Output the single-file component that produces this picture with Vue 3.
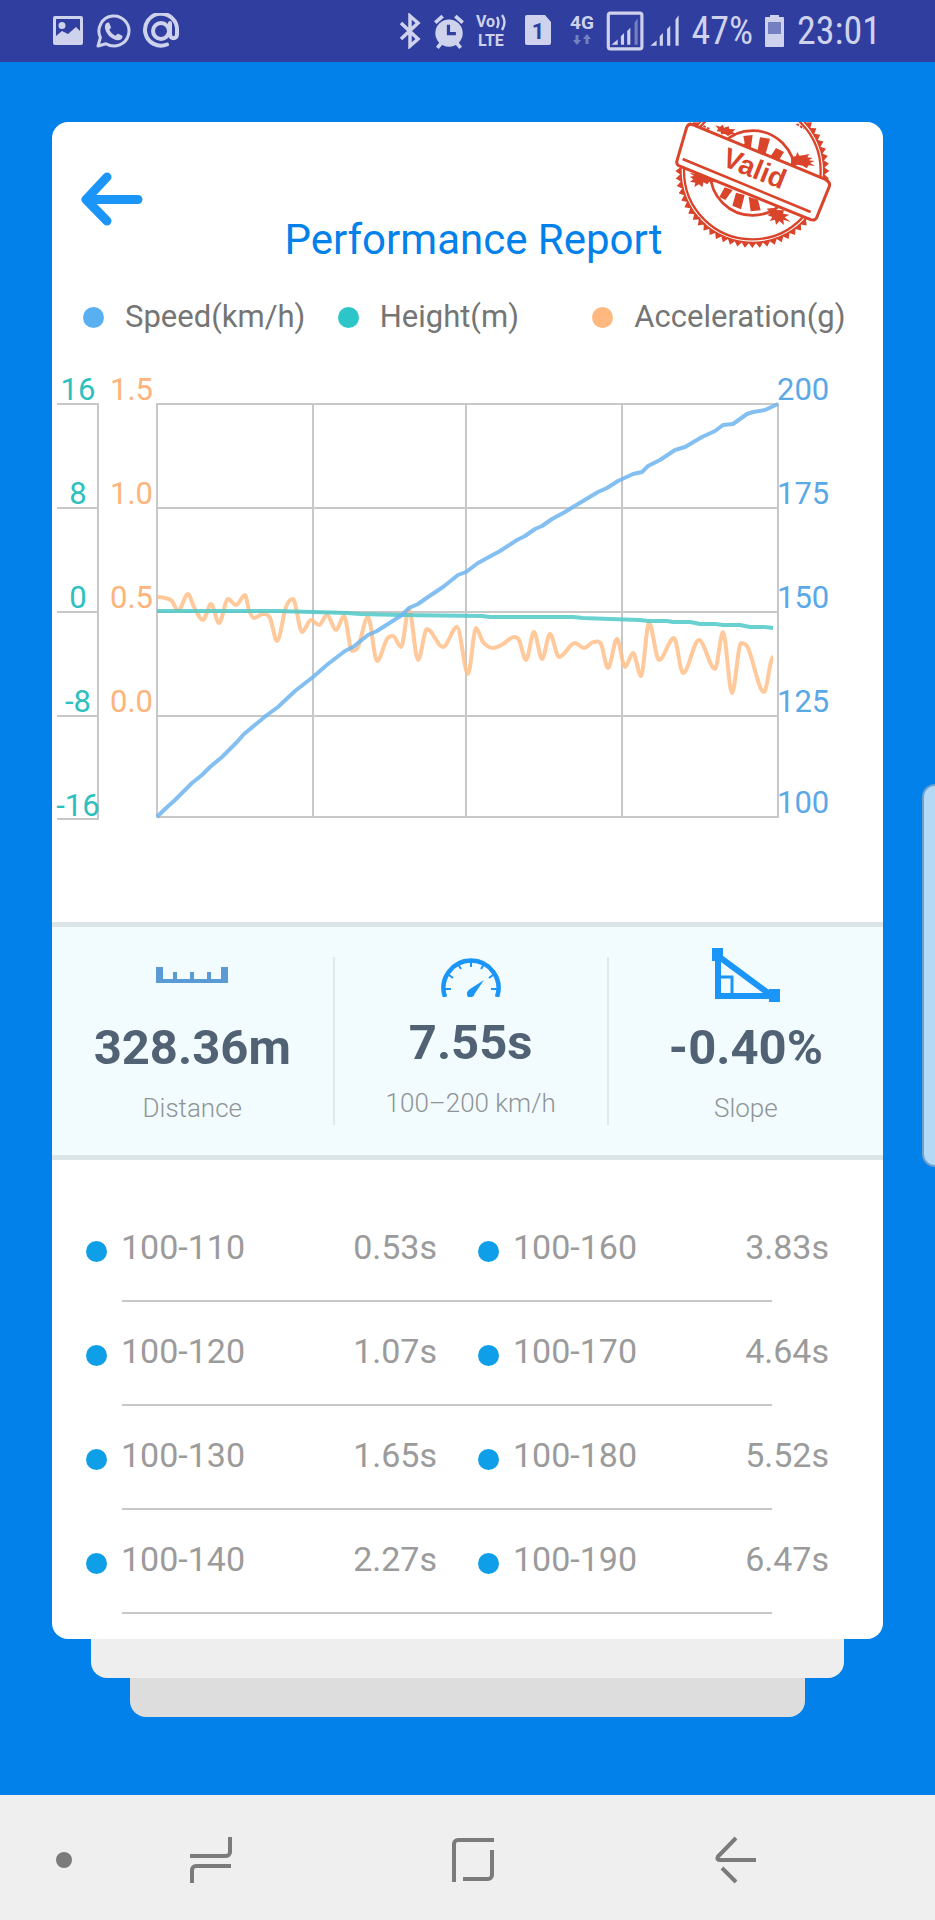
<template>
  <div class="screen">
    <header class="status-bar">
      <div class="status-left">
        <svg width="32" height="36" viewBox="0 0 32 36" aria-hidden="true">
          <path fill-rule="evenodd" d="M3 3h26a2 2 0 0 1 2 2v25a2 2 0 0 1-2 2H3a2 2 0 0 1-2-2V5a2 2 0 0 1 2-2zm1 3v17l6-5 6 3 8-7 4 4V6zm6 3a3.500 3.500 0 1 1 0 7 3.500 3.500 0 0 1 0-7z" fill="currentColor" />
        </svg>
        <svg width="36" height="36" viewBox="0 0 36 36" aria-hidden="true">
          <path d="M3 33l2.400-8.600A15 15 0 1 1 11 30.700z" fill="none" stroke="currentColor" stroke-width="3" stroke-linejoin="round" />
          <path d="M11 10.500c1.500-1.500 3-1.500 3.600.2l1.200 3c.3 1-.2 1.800-1.500 3 1.600 3 3.500 4.800 6.500 6 1.400-1.800 2-2.200 3-1.800l3 1.600c1.300.7.7 3-1 4-3 1.700-7 .3-10.500-2.500C11.500 20.800 8 14 11 10.500z" fill="currentColor" />
        </svg>
        <svg width="38" height="36" viewBox="0 0 38 36" aria-hidden="true">
          <path d="M25 31.500A16 16 0 1 1 35 17.500v4c0 5-7 5-7 0V10" fill="none" stroke="currentColor" stroke-width="4" stroke-linecap="round" />
          <circle cx="19" cy="18" r="8" fill="none" stroke="currentColor" stroke-width="4" />
        </svg>
      </div>
      <div class="status-right">
        <svg width="24" height="36" viewBox="0 0 24 36" aria-hidden="true">
          <path d="M3 10l17 16-8 7V3l8 7L3 26" fill="none" stroke="currentColor" stroke-width="3.500" />
        </svg>
        <svg width="34" height="38" viewBox="0 0 32 36" aria-hidden="true">
          <circle cx="16" cy="20" r="13" fill="currentColor" />
          <path d="M3 10l7-6M29 10l-7-6M5 34l4-5M27 34l-4-5" stroke="currentColor" stroke-width="3.500" />
          <path d="M15.500 12v8.500h7" fill="none" stroke="#303f9f" stroke-width="3" />
        </svg>
        <svg width="32" height="44" viewBox="0 -4 32 44" role="img" aria-label="VoLTE">
          <text class="tiny" x="0" y="14" font-size="16">Vo</text>
          <text class="tiny" x="2" y="33" font-size="16">LTE</text>
          <path d="M21 4q3 5 0 11M26 2q5 7 0 15" fill="none" stroke="currentColor" stroke-width="2.400" />
        </svg>
        <svg width="40" height="36" viewBox="0 0 40 36" role="img" aria-label="SIM 1">
          <path d="M9 2h18l6 7v21a2 2 0 0 1-2 2H9a2 2 0 0 1-2-2V4a2 2 0 0 1 2-2z" fill="currentColor" />
          <text class="tiny" x="20" y="26" font-size="22" text-anchor="middle" fill="#303f9f">1</text>
        </svg>
        <svg width="28" height="44" viewBox="0 -4 28 44" role="img" aria-label="4G">
          <text class="tiny" x="14" y="16" font-size="19" text-anchor="middle">4G</text>
          <path d="M9 22v7M19 31v-7" stroke="#7480bf" stroke-width="3" />
          <path d="M5 27h8l-4 5zM15 26h8l-4-5z" fill="#7480bf" />
        </svg>
        <svg width="76" height="42" viewBox="0 0 72 40" aria-hidden="true">
          <rect x="2" y="3" width="32" height="34" rx="2" fill="none" stroke="currentColor" stroke-width="3" />
          <path d="M5 33l6-5v5zM14 33V25l3-3v11zM20 33V20l3-3v16z" fill="currentColor" />
          <path d="M27 33V12l3-4v25z" fill="#7480bf" />
          <path d="M42 34l6-5v5zM51 34V25l3-3v12zM58 34V18l3-3v19zM66 34V9l3-4v29z" fill="currentColor" />
        </svg>
        <span>47%</span>
        <svg width="24" height="36" viewBox="0 0 24 36" aria-hidden="true">
          <path d="M3 4h4V2h9v2h4a1 1 0 0 1 1 1v28a1 1 0 0 1-1 1H3a1 1 0 0 1-1-1V5a1 1 0 0 1 1-1z" fill="currentColor" />
          <path d="M5 9h13v12H5z" fill="#7480bf" />
        </svg>
        <time>23:01</time>
      </div>
    </header>

    <main class="content">
      <article class="card">
        <svg class="stamp" viewBox="72 66 474 378" aria-label="Valid" role="img">
          <polygon :points="stampTeeth" class="ink" />
          <circle cx="307" cy="213" r="212" fill="#fff" />
          <circle cx="307" cy="213" r="205" fill="none" class="ink-line" stroke-width="7" />
          <circle cx="308" cy="219" r="127" fill="none" class="ink-line" stroke-width="8" />
          <path class="ink" d="M280 108l28-3-7 50-27-13 10-12zM330 112l30 4-14 48-24-8zM378 144l24 12-20 32-25-12zM224 262l24 8-22 30-18-9zM258 278l26 7-11 43-26-11zM296 290l28 9 8 32-30 3z" />
          <path class="ink" d="M196 76l14 4 8-6 4 9 14-4 2 8 18 1-8 8 13 8-18-1-9 5-9-6-12 1-1-8-12-1 4-8zM424 172l14-4 4-12 6 11 16-2 14-3-6 10 16 2-12 7 18 2-14 6 15 9-19-2-6 9-12-8-16-3-10 5-9-8z" />
          <path class="ink" d="M118 218l20 4 10-4 16 8 22 5-6 8 18 8-20-2-6 8-12-6-3 15-10-9-14 8 3-13-16-3 10-7-11-8 13-2zM350 326l18-2 14 6 20 1-3 10 19 3-14 8 18 14-22-7 2 16-14-12-10 12-3-16-16 4 8-12-14-5 9-8z" />
          <path d="M196 230l28 12 22 4M160 78l20 10M440 72l22 14M126 336l26 22M150 362l18 14" class="ink-line" stroke-width="6" stroke-dasharray="8 4" />
          <path d="M126 73L526 238Q542 246 538 259L500 353Q494 363 482 359L86 197Q78 192 81 182L110 82Q116 70 126 73z" fill="#fff" class="ink-line" stroke-width="9" stroke-linejoin="round" />
          <path d="M98 177L482 336" class="ink-line" stroke-width="8" />
          <text class="stamp-text" transform="translate(212 195) rotate(22)">Valid</text>
        </svg>

        <header class="card-header">
          <button class="back" type="button" aria-label="Back">
            <svg width="64" height="56" viewBox="0 0 64 56" aria-hidden="true">
              <path d="M27 7L6 29.500 27 51M6 29.500h52" fill="none" stroke="#1b95f8" stroke-width="9" stroke-linecap="round" stroke-linejoin="round" />
            </svg>
          </button>
          <h1>Performance Report</h1>
        </header>

        <ul class="legend">
          <li v-for="item in legend" :key="item.label">
            <span class="dot" :class="item.name"></span>{{ item.label }}
          </li>
        </ul>

        <svg class="chart" viewBox="0 0 831 480" role="img" aria-label="Speed, height and acceleration">
          <g class="grid">
            <path v-for="y in gridY" :key="'h' + y" :d="`M104 ${y}H727`" />
            <path v-for="x in gridX" :key="'v' + x" :d="`M${x} 44V457`" />
            <path d="M5 44H46V459H5M5 148H46M5 252H46M5 356H46" />
          </g>
          <path class="line acceleration" :d="smooth(acceleration)" />
          <path class="line height" :d="straight(height)" />
          <path class="line speed" :d="straight(speed)" />
          <text v-for="(t, i) in heightTicks" :key="'t' + t" class="height" x="26" :y="40 + i * 104" text-anchor="middle">{{ t }}</text>
          <text v-for="(t, i) in accelerationTicks" :key="'a' + t" class="acceleration" x="101" :y="40 + i * 104" text-anchor="end">{{ t }}</text>
          <text v-for="(t, i) in speedTicks" :key="'s' + t" class="speed" x="725" :y="gridY[i] - 4">{{ t }}</text>
        </svg>

        <section class="stats">
          <div class="stat">
            <svg width="74" height="54" viewBox="0 0 74 54" aria-hidden="true">
              <path d="M1 19h7v12h10v-7h4v7h13v-7h4v7h13v-7h4v7h10V19h7v16H1z" fill="#5b9bd5" />
            </svg>
            <strong>328.36m</strong>
            <span>Distance</span>
          </div>
          <div class="stat">
            <svg width="60" height="44" viewBox="0 0 60 44" aria-hidden="true">
              <path d="M4 44A27.500 27.500 0 1 1 56 44" fill="none" stroke="#1b95f8" stroke-width="4.500" />
              <path d="M4 36h6M50 36h6M8 22l4 3M52 22l-4 3M17 11l3 5M43 11l-3 5M30 7v7" stroke="#1b95f8" stroke-width="2" />
              <path d="M43 27L33.500 41Q33 44 30 44H27Q24 39 29 36z" fill="#1b95f8" />
            </svg>
            <strong>7.55s</strong>
            <span>100–200 km/h</span>
          </div>
          <div class="stat">
            <svg width="68" height="54" viewBox="0 0 68 54" aria-hidden="true">
              <path d="M6 29h14v18" fill="none" stroke="#1b95f8" stroke-width="3" />
              <path d="M6 6v42h54" fill="none" stroke="#1b95f8" stroke-width="6" />
              <path d="M6 8L60 48" stroke="#1b95f8" stroke-width="6" />
              <path d="M0 0h11v13H0zM57 41h11v13H57z" fill="#1b95f8" />
            </svg>
            <strong>-0.40%</strong>
            <span>Slope</span>
          </div>
        </section>

        <table class="splits">
          <tbody>
            <tr v-for="row in splits" :key="row[0].range">
              <template v-for="cell in row" :key="cell.range">
                <th scope="row"><span class="dot"></span>{{ cell.range }}</th>
                <td>{{ cell.time }}</td>
              </template>
            </tr>
          </tbody>
        </table>
      </article>
      <div class="sheet sheet-near"></div>
      <div class="sheet sheet-far"></div>
    </main>

    <nav class="nav-bar">
      <button class="pin" type="button" aria-label="Hide navigation bar"><span></span></button>
      <button type="button" aria-label="Recent apps">
        <svg width="44" height="48" viewBox="0 0 44 48"><path d="M41 1v15a4 4 0 0 1-4 4H1M3 47V34a4 4 0 0 1 4-4h35" /></svg>
      </button>
      <button type="button" aria-label="Home">
        <svg width="44" height="48" viewBox="0 0 44 48"><path d="M3 46V8a4 4 0 0 1 4-4h36M41 14v25a4 4 0 0 1-4 4H12" /></svg>
      </button>
      <button type="button" aria-label="Back">
        <svg width="44" height="48" viewBox="0 0 44 48"><path d="M22 2L4 20.500Q2 24 6 24H42M8 32l14 14" /></svg>
      </button>
    </nav>

    <div class="edge-handle"></div>
  </div>
</template>

<script setup>
const legend = [
  { name: 'speed', label: 'Speed(km/h)' },
  { name: 'height', label: 'Height(m)' },
  { name: 'acceleration', label: 'Acceleration(g)' },
]

const gridX = [105, 261, 414, 570, 726]
const gridY = [44, 148, 252, 356, 457]

const heightTicks = ['16', '8', '0', '-8', '-16']
const accelerationTicks = ['1.5', '1.0', '0.5', '0.0']
const speedTicks = ['200', '175', '150', '125', '100']

// Series points, in chart units
const speed = [
  [105, 457], [113, 449], [123, 440], [140, 423], [150, 415], [158, 407], [170, 397], [185, 382],
  [192, 374], [215, 355], [226, 347], [243, 331], [261, 317], [276, 304], [293, 291], [301, 287],
  [316, 275], [325, 271], [350, 255], [357, 248], [366, 244], [376, 237], [391, 227], [406, 215],
  [414, 212], [426, 203], [448, 191], [465, 180], [473, 176], [483, 169], [490, 166], [500, 159],
  [513, 152], [521, 147], [546, 132], [555, 128], [566, 121], [581, 114], [590, 112], [596, 106],
  [608, 100], [623, 90], [633, 87], [650, 77], [663, 71], [671, 65], [681, 64], [695, 54],
  [701, 52], [713, 50], [726, 44],
]
const height = [
  [105, 251], [225, 251], [261, 252], [295, 253], [308, 254], [348, 255], [430, 256], [438, 257],
  [521, 257], [531, 258], [558, 259], [588, 260], [596, 261], [615, 261], [621, 262], [638, 262],
  [648, 264], [663, 264], [671, 265], [688, 265], [698, 267], [713, 267], [721, 268],
]
const acceleration = [
  [105, 237], [113, 238], [120, 241], [126, 251], [136, 234], [142, 247], [151, 260], [159, 244],
  [167, 263], [176, 239], [184, 245], [193, 235], [197, 250], [202, 258], [211, 254], [218, 258],
  [225, 281], [234, 247], [241, 239], [250, 272], [259, 260], [267, 265], [275, 255], [284, 270],
  [292, 256], [300, 291], [306, 287], [316, 257], [325, 301], [335, 279], [341, 276], [349, 287],
  [357, 249], [366, 300], [375, 269], [391, 287], [405, 267], [416, 314], [424, 268], [431, 282],
  [441, 288], [451, 284], [462, 277], [467, 280], [474, 300], [482, 272], [490, 299], [498, 274],
  [507, 297], [523, 283], [532, 288], [542, 282], [549, 284], [556, 308], [565, 279], [573, 307],
  [581, 293], [589, 316], [597, 263], [607, 300], [622, 278], [631, 313], [647, 280], [663, 309],
  [671, 272], [680, 333], [689, 283], [696, 288], [712, 332], [721, 297],
]

const splits = [
  [{ range: '100-110', time: '0.53s' }, { range: '100-160', time: '3.83s' }],
  [{ range: '100-120', time: '1.07s' }, { range: '100-170', time: '4.64s' }],
  [{ range: '100-130', time: '1.65s' }, { range: '100-180', time: '5.52s' }],
  [{ range: '100-140', time: '2.27s' }, { range: '100-190', time: '6.47s' }],
]

const straight = points => 'M' + points.map(p => p.join(' ')).join('L')

// Cubic curve that stays flat at each peak and dip
function smooth(points) {
  const slope = points.map((p, i) => {
    const a = points[i - 1]
    const b = points[i + 1]
    if (!a || !b || (p[1] - a[1]) * (b[1] - p[1]) <= 0) return 0
    return (b[1] - a[1]) / (b[0] - a[0])
  })
  let d = 'M' + points[0].join(' ')
  for (let i = 1; i < points.length; i++) {
    const [x0, y0] = points[i - 1]
    const [x1, y1] = points[i]
    const h = (x1 - x0) / 3
    d += `C${x0 + h} ${y0 + slope[i - 1] * h} ${x1 - h} ${y1 - slope[i] * h} ${x1} ${y1}`
  }
  return d
}

const stampTeeth = Array.from({ length: 128 }, (_, i) => {
  const r = i % 2 ? 217 : 231
  const a = (i * Math.PI) / 64
  return `${(307 + r * Math.cos(a)).toFixed(1)},${(213 + r * Math.sin(a)).toFixed(1)}`
}).join(' ')
</script>

<style>
body { margin: 0; background: #0281ea; }
</style>

<style scoped>
.screen {
  position: relative; display: flex; flex-direction: column; min-height: 100vh;
  background: #0281ea; font-family: Roboto, "Liberation Sans", sans-serif; overflow: hidden;
}
svg { display: block; flex: none; }
button { padding: 0; border: 0; background: none; cursor: pointer; }

.status-bar {
  display: flex; justify-content: space-between; align-items: center; box-sizing: border-box;
  height: 62px; padding: 0 54px 0 52px; background: #303f9f; color: #cfd2ec;
}
.status-left { display: flex; gap: 11px; }
.status-right {
  display: flex; align-items: center; gap: 10px; white-space: nowrap;
  font: 38px/40px "Roboto Condensed", "Liberation Sans Narrow", Roboto, sans-serif;
}
.tiny { font-family: Roboto, sans-serif; font-weight: 700; }
.tiny:not([fill]) { fill: currentColor; }

.content { flex: 1; padding: 60px 52px 78px; }
.card {
  position: relative; padding-bottom: 25px; border-radius: 16px; background: #fff; overflow: hidden;
}
.stamp { position: absolute; top: 0; right: 51px; width: 158px; height: 126px; }
.ink { fill: #d9442b; }
.ink-line { stroke: #d9442b; }
.stamp-text { font: 700 84px "Liberation Sans", sans-serif; fill: #d9442b; }

.card-header {
  display: grid; grid-template-columns: 1fr auto 1fr; align-items: start; padding: 48px 28px 0;
}
.back { justify-self: start; }
h1 { margin: 44px 0 0; padding-left: 12px; font-size: 42px; line-height: 52px; font-weight: 400; color: #0281ea; }

.legend {
  display: grid; grid-template-columns: repeat(3, 1fr); margin: 31px 0 23px; padding: 0 36px 0 31px;
  list-style: none; font-size: 31px; line-height: 40px; color: #757575;
}
.legend li { display: flex; align-items: center; gap: 21px; white-space: nowrap; }
.dot { flex: none; width: 21px; height: 21px; border-radius: 50%; background: #0f9fe8; }
.dot.speed { background: #5aaff0; }
.dot.height { background: #2dc6c8; }
.dot.acceleration { background: #ffb980; }

.chart { width: 100%; height: auto; font-size: 31px; }
.grid path { fill: none; stroke: #c8c8c8; stroke-width: 2; }
.line { fill: none; stroke-width: 4; stroke-linejoin: round; stroke-opacity: .85; }
.line.speed { stroke: #6db5ef; }
.line.height { stroke: #4fcac9; }
.line.acceleration { stroke: #ffbf8a; }
text.speed { fill: #5aa9e6; }
text.height { fill: #2ebfbf; }
text.acceleration { fill: #fcb47c; }

.stats {
  display: grid; grid-template-columns: 34fr 33fr 33fr; align-items: center; height: 228px; margin-top: 82px;
  border: solid #dbe5e8; border-width: 5px 0; background: #f2fcfe;
}
.stat {
  display: flex; flex-direction: column; align-items: center; justify-content: center;
  height: 168px; border-right: 2px solid #dfe8ea;
}
.stat:last-child { border-right: 0; }
.stat strong { margin-top: 16px; font-size: 49px; line-height: 60px; font-weight: 700; color: #516274; }
.stat span { margin-top: 4px; font-size: 26px; line-height: 52px; font-weight: 300; color: #8f9496; }

.splits { display: block; margin-top: 38px; padding: 0 54px 0 34px; font-size: 34px; color: #9b9b9b; }
.splits tbody { display: block; }
.splits tr { display: grid; grid-template-columns: 1fr auto 1fr auto; line-height: 98px; }
.splits tr::after {
  content: ""; grid-column: 1 / -1; height: 2px; margin: 4px 57px 0 36px; background: #c8c8c8;
}
.splits th { display: flex; align-items: center; gap: 14px; padding: 0; font-weight: 400; }
.splits td { padding: 0; }
.splits td:nth-child(2) { padding-right: 41px; }
.splits .dot { margin-top: 8px; }

.sheet { height: 39px; border-radius: 0 0 16px 16px; }
.sheet-near { margin: 0 39px; background: #eee; }
.sheet-far { margin: 0 78px; background: #ddd; }

.nav-bar {
  display: flex; align-items: center; box-sizing: border-box; height: 125px;
  padding: 4px 68px 0 48px; background: #efefef;
}
.nav-bar button { display: flex; flex: 1; align-items: center; justify-content: center; height: 72px; }
.nav-bar .pin { flex: 0 0 32px; }
.pin span { width: 16px; height: 16px; border-radius: 50%; background: #7b7b7b; }
.nav-bar path { fill: none; stroke: #7b7b7b; stroke-width: 4; }

.edge-handle {
  position: absolute; top: 784px; right: 0; width: 11px; height: 379px;
  border: 2px solid #6f9fca; border-right: 0; border-radius: 14px 0 0 14px; background: #b3d9f7;
}
</style>
